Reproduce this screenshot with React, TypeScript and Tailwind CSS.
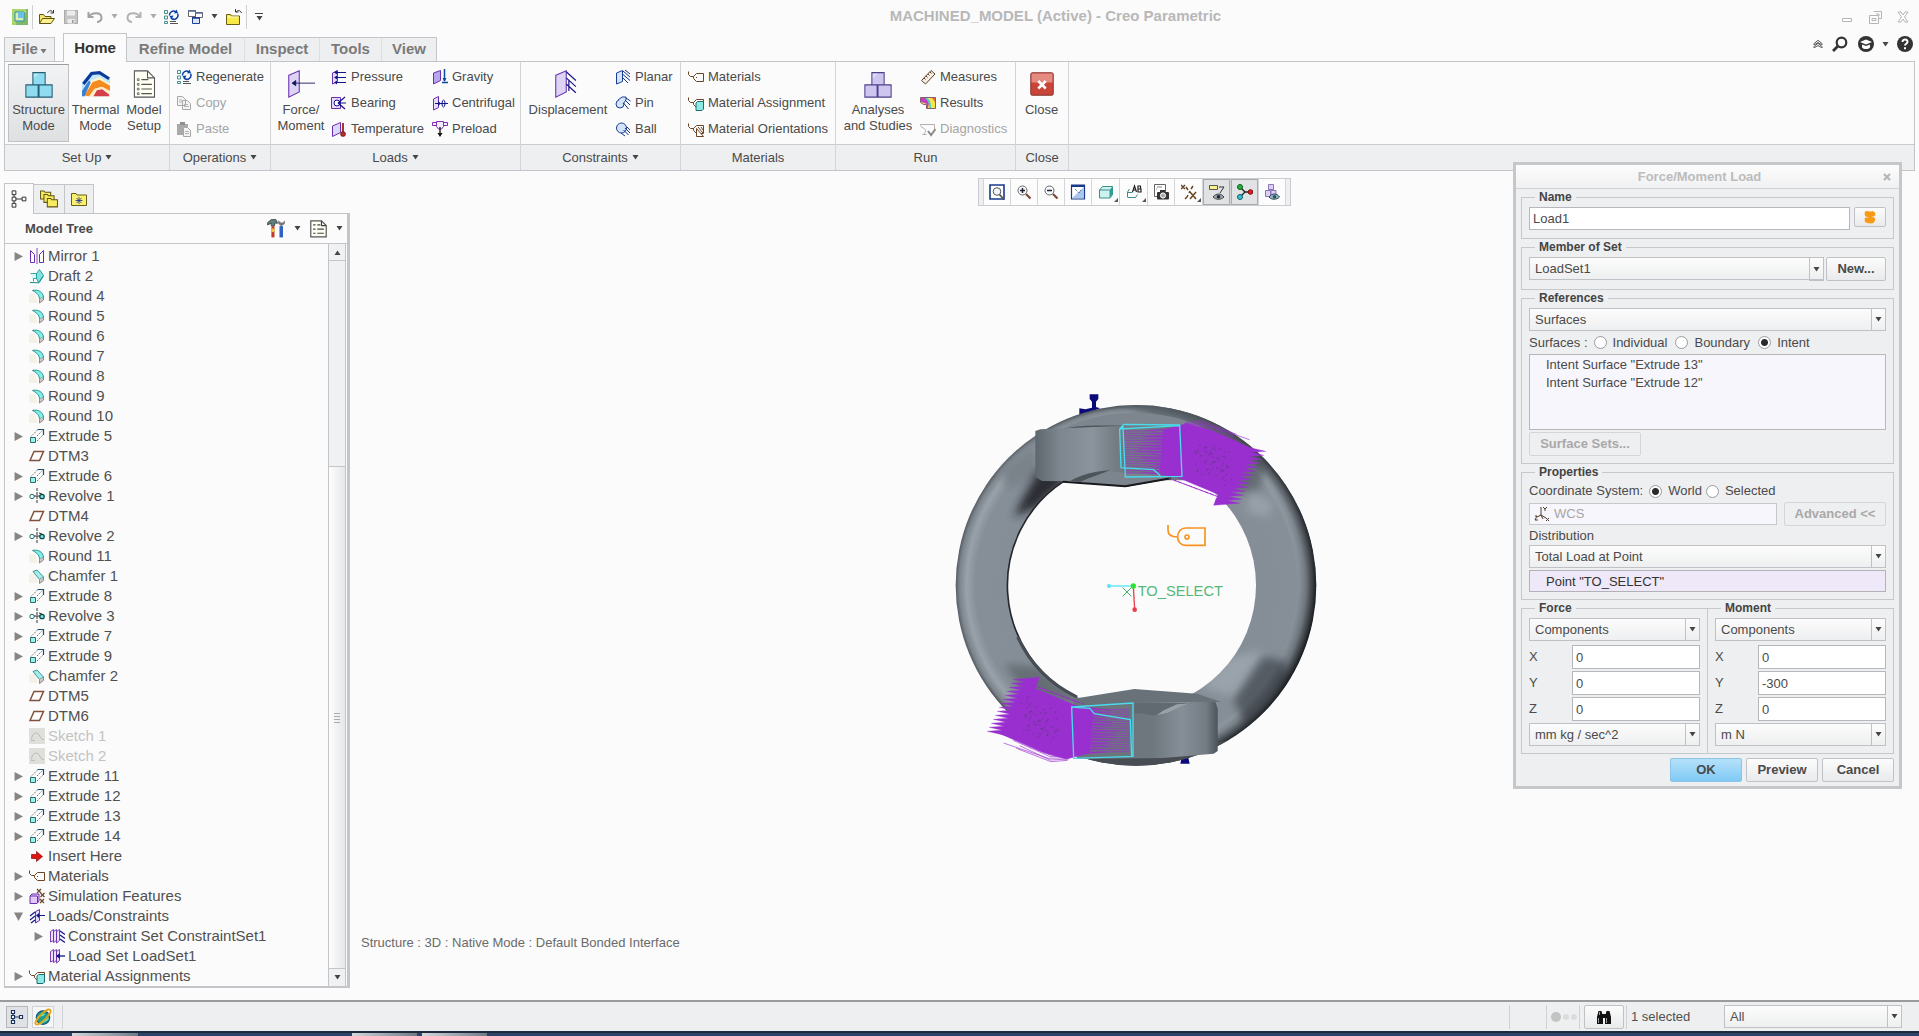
import { useState } from "react";
import type { ReactNode } from "react";

type IconName = keyof typeof ICONS;

type TreeNode = {
  label: string;
  icon: IconName;
  arrow?: "right" | "down";
  level?: number;
  muted?: boolean;
};

const GREEN = "#0f8f8f";
const NAVY = "#14148c";
const PURPLE = "#6a2fb0";

const pane = <path d="M1.5 4 6.5 1.5v11L1.5 15z" fill="#e6dcfa" stroke={PURPLE} />;
const tag = (
  <path d="M.5 2.5v3l2 2h3M5.5 7.5l3-3h7v8h-7l-3-3zM8 8.500h1" fill="none" stroke="#6b4423" />
);
const regen = (
  <>
    <path d="M1.500 1.500h3v3h-3zM1.500 7h3v3h-3zM1.500 12.500h3v2h-3z" fill="#fff" stroke="#3f8f8f" />
    <path d="M7 12.500h6M7 14.500h8" stroke="#555" />
    <path d="M6.500 6.500a4 4 0 0 1 6.500-3.500M14.500 4.500a4 4 0 0 1-6.500 4.500" fill="none" stroke="#0b3fa8" strokeWidth="1.500" />
    <path d="m11 4.500 4-.5-1.500-3.500zM10.500 6.500l-4 .5 2 3.500z" fill="#0b3fa8" />
  </>
);
const page = (
  <>
    <path d="M1.500 1.500h9l4 4v9.500h-13z" fill="#fffef5" stroke="#555" />
    <path d="M10.500 1.500v4h4M3.500 5h2M3.500 8.500h2M3.500 12h2M7 5h2.500M7 8.500h5.500M7 12h5.500" fill="none" stroke="#444" />
  </>
);
const cubes = (fill: string, line: string) => (
  <>
    <path d="M4.500 1.500h7v7h-7zM.5 8.500h7v7h-7zM8 8.500h7.500v7H8z" fill={fill} stroke={line} strokeWidth=".6" />
    <path d="M5 5 8 2h-3z" fill="#fff" opacity=".35" />
  </>
);
const panes3 = (
  <path d="M1.500 3.500 4.500 1.500v11l-3 1.500zM4.500 3.500l3-2v11l-3 2zM7.500 3.500l3-2v11l-3 2.500z" fill="#eadffc" stroke={PURPLE} strokeWidth=".9" />
);
const lens = (
  <>
    <path d="m10 10 4.500 4.500" stroke="#7a4a3a" strokeWidth="2.200" />
    <circle cx="6.500" cy="6.500" r="4.500" fill="#f4fafd" stroke="#666" />
  </>
);

const ICONS = {
  app: (
    <>
      <path d="M0 0h16v16H0z" fill="#7fb868" />
      <path d="M0 0h14v4H4v12H0z" fill="#a9d66b" />
      <path d="M3 3h9v9H3z" fill="#d8efb0" stroke="#2f8fc0" />
      <path d="M6 3h6v6H6z" fill="#6cc0e4" />
    </>
  ),
  open: (
    <>
      <path d="M.5 14.500v-9h4l1.500 2h6v2" fill="#f5e36b" stroke="#5f5416" />
      <path d="m.5 14.500 3-5h12l-3.500 5z" fill="#fbf08c" stroke="#5f5416" />
      <path d="M8.500 4c1.500-3 4-3 5.500-.5M14.500 1v3h-3" fill="none" stroke="#333" />
    </>
  ),
  save: (
    <>
      <path d="M1.500 1.500h13v13h-13z" fill="#c6c6c6" stroke="#a8a8a8" />
      <path d="M4 1.500h8v5H4zM4.500 10h7v4.500h-7z" fill="#ececec" />
      <path d="M9 11h1.500v3H9z" fill="#999" />
    </>
  ),
  undo: <path d="M1.500 3v5h5M2 8c2-4.500 12-5.500 12.500.5.2 3-2.500 4.500-4.500 4.500" fill="none" stroke="#a3a3a3" strokeWidth="2" />,
  redo: <path d="M14.500 3v5h-5M14 8C12 3.500 2 2.500 1.500 8.500 1.300 11.500 4 13 6 13" fill="none" stroke="#b3b3b3" strokeWidth="2" />,
  regen,
  windows: (
    <>
      <path d="M1.500 1.500h7v6h-7zM8.500 3.500h7v5h-7z" fill="#fff" stroke="#666" />
      <path d="M1 2h8M8 4h8" stroke="#5b6f96" strokeWidth="1.500" />
      <path d="M5.500 8.500h7v6h-7z" fill="#d9e6fb" stroke="#1c3f94" />
      <path d="M5 9h8" stroke="#1c3f94" strokeWidth="1.500" />
    </>
  ),
  closeFolder: (
    <>
      <path d="M.5 15.500v-10h4l1 1.500h8v8.500z" fill="#f7e948" stroke="#6b5f18" />
      <path d="M1.500 8h11" stroke="#fffbd0" />
      <path d="M15.500 4c-1-3-4-3-5.500-1M9.500 0v3h3" fill="none" stroke="#333" />
    </>
  ),
  structure: cubes("#8fdcf0", "#245c74"),
  thermal: (
    <>
      <path d="M0 15V7l5-6h6l5 4v10z" fill="#bfe6fa" />
      <path d="M.8 8 5.500 2 10 1.500 15.500 5" fill="none" stroke="#0c3a9a" strokeWidth="1.800" />
      <path d="M0 12.500 5 6l5-2 6 4v7H0z" fill="#fff2cf" />
      <path d="m1.500 14.500 4.500-7.500 4-1.500L16 9v3l-5-2.500-4 1.500-3 4z" fill="#f58a1f" />
      <path d="M0 15v-3l4-6 1 1-3.500 8z" fill="#3a7fd0" />
      <path d="m6.500 15 2-3.500 3-.5 4 3v1z" fill="#d3404a" />
      <path d="m5 15 2.500-4 4-1 4.500 2.500" fill="none" stroke="#ffe9c4" strokeWidth=".8" />
    </>
  ),
  setup: (
    <>
      <path d="M2.500.5H10l4 4v11H2.500z" fill="#fffff4" stroke="#555" strokeWidth=".6" />
      <path d="M10 .5v4h4M6.500 5.500h4M6.500 8.200h6M6.500 10.900h6M6.500 13.500h6" fill="none" stroke="#555" strokeWidth=".6" />
      <path d="M4.200 5h1v1h-1zM4.200 7.700h1v1h-1zM4.200 10.400h1v1h-1zM4.200 13h1v1h-1z" fill="none" stroke="#444" strokeWidth=".4" />
    </>
  ),
  copy: (
    <>
      <path d="M1.500 1.500h5l3 3v6h-8zM6.500 5.500h5l3 3v6h-8z" fill="#f4f4f4" stroke="#a8a8a8" />
      <path d="M3 5h3M3 7h3M8 9.500h4M8 11.500h5" stroke="#b5b5b5" />
    </>
  ),
  paste: (
    <>
      <path d="M1 3h11v11H1z" fill="#aaa" />
      <path d="M4 1h5v3H4z" fill="#8f8f8f" />
      <path d="M7.500 6.500h4l3 3v6h-7z" fill="#f4f4f4" stroke="#a8a8a8" />
      <path d="M9 10.500h4M9 12.500h4" stroke="#b5b5b5" />
    </>
  ),
  force: (
    <>
      <path d="M1 3 7 .5v12L1 15.500z" fill="#dcd3f5" stroke={PURPLE} strokeWidth=".6" />
      <path d="M3 7.500h13M3 7.500l2-1.500v3z" fill="#14145a" stroke="#14145a" strokeWidth=".5" />
    </>
  ),
  pressure: (
    <>
      {pane}
      <path d="M4 3.500h11M4 8.500h11M4 13.500h11" stroke={NAVY} />
      <path d="m3 3.500 3-2v4zM3 8.500l3-2v4zM3 13.500l3-2v4z" fill={NAVY} />
    </>
  ),
  bearing: (
    <>
      <path d="M.5 2.500h9v11h-9z" fill="#e6dcfa" stroke={PURPLE} />
      <circle cx="6" cy="8" r="3" fill="#fff" stroke={NAVY} />
      <path d="M7 8 14 2M7 8h8M7 8l7 6" stroke={NAVY} strokeWidth="1.200" />
    </>
  ),
  temperature: (
    <>
      <path d="M1.500 5 9.500 1.500v10l-8 4z" fill="#d9d8fa" stroke={PURPLE} />
      <path d="M12 2v9" stroke="#a33" strokeWidth="2" />
      <circle cx="12" cy="13" r="2.500" fill="#b52a2a" stroke="#611" strokeWidth=".6" />
    </>
  ),
  gravity: (
    <>
      <path d="M1.500 4 8.500 1.500v10l-7 3.500z" fill="#b9a5ee" stroke={PURPLE} />
      <path d="M12.500 0v12M10 13.500h6" stroke="#104a9c" strokeWidth="1.500" />
      <path d="m10.500 9 2 4 2-4z" fill="#104a9c" />
    </>
  ),
  centrifugal: (
    <>
      {pane}
      <path d="M3 8.500h13" stroke={NAVY} />
      <path d="m6 6 3 2.500L6 11z" fill={NAVY} />
      <ellipse cx="11.500" cy="8.500" rx="1.500" ry="3.500" fill="none" stroke={NAVY} />
    </>
  ),
  preload: (
    <>
      <path d="M.5 1.500h4v3h-4zM11.500 1.500h4v3h-4zM4.500.5h7v5l-2 2.500h-3l-2-2.500z" fill="#f4ecff" stroke="#8030b0" />
      <path d="M8 6v8" stroke="#111" strokeWidth="1.300" />
      <path d="m5.500 12 2.500 4 2.500-4z" fill="#111" />
    </>
  ),
  displacement: (
    <>
      <path d="M1 3 7 .5v12L1 15.500z" fill="#dcd3f5" stroke={PURPLE} strokeWidth=".6" />
      <path d="m7 1 5.500 5M7 4.500l5.500 5M7 8l5.500 5M8.500 5.500V12" stroke="#1b1b80" strokeWidth=".7" />
    </>
  ),
  planar: (
    <>
      <path d="M1.500 4 7.500 1.500v11l-6 2.500z" fill="#d3e4fb" stroke="#1c3f94" />
      <path d="m8 2 7 6M8 5.500l7 6M8 9l5 5M10 1l5 4" stroke="#16308c" />
    </>
  ),
  pin: (
    <>
      <circle cx="5" cy="9" r="4" fill="#d3e4fb" stroke="#1c3f94" />
      <path d="m3 5 4-3h4v3l-3 4" fill="#d3e4fb" stroke="#1c3f94" />
      <path d="m10 5 5 5M8.500 8l5 6M11 3l4.500 3" stroke="#16308c" />
    </>
  ),
  ball: (
    <>
      <circle cx="6.500" cy="7" r="5" fill="#d3e4fb" stroke="#1c3f94" />
      <path d="m10 7 5 5M8.500 9l5 5M6 12l4 3M12 6l3 3" stroke="#16308c" />
    </>
  ),
  materials: tag,
  assignment: (
    <>
      {tag}
      <path d="m8 8 1.500-1.500h6V14L14 15.500H8z" fill="#8ee8e4" stroke="#1a7070" />
    </>
  ),
  orientations: (
    <>
      {tag}
      <path d="M8.500 7.500v8h7z" fill="#fff" stroke="#6b4423" />
      <path d="m10 6 5 6M13 6l2 3" stroke="#6b4423" />
    </>
  ),
  analyses: cubes("#cfc6f0", "#4d3f8a"),
  measures: (
    <>
      <path d="m1.500 11.500 9.500-10 4 3.500-9.500 10z" fill="#f7efe2" stroke="#5a3d28" />
      <path d="m4 9 1.500 1.500M6 7l1.500 1.500M8 5l1.500 1.500M10 3l1.500 1.500" stroke="#5a3d28" />
    </>
  ),
  results: (
    <>
      <path d="M.5 2.500h15v11h-9v-4h-3l-3-2z" fill="#f2e64a" stroke="#8a5b6c" />
      <path d="M1 3h5l3 5-1 5H7V9L1 7z" fill="#c23fc0" />
      <path d="M7 3c3 2 4 5 4 10H9.500C9 8 8 5 5 3z" fill="#45d0c8" />
      <path d="M12 3l3 4V3z" fill="#e9663a" />
    </>
  ),
  diagnostics: (
    <>
      <path d="M.5 3.500h14v5M.5 3.500c0 4 5 3 5 6s-2 4-3 4h4" fill="none" stroke="#b0b0b0" />
      <path d="m8 10 3 4 4.500-6" fill="none" stroke="#8b8b8b" strokeWidth="2" />
    </>
  ),
  close: (
    <>
      <rect x=".5" y=".5" width="15" height="15" rx="1" fill="#c9453a" stroke="#7d2a22" strokeWidth=".6" />
      <path d="M1 1h14v6H1z" fill="#e58a80" />
      <path d="m5.500 6 5 5M10.500 6l-5 5" stroke="#fff" strokeWidth="1.700" />
    </>
  ),
  treeTab: <path d="M2.500 1.500h3v3h-3zM2.500 6.500h3v3h-3zM2.500 11.500h3v3h-3zM10.500 6.500h3v3h-3zM4 4.500v2M4 9.500v2M5.500 8h5" fill="none" stroke="#333" strokeWidth=".8" />,
  treeTabBlue: <path d="M2.500 1.500h3v3h-3zM2.500 6.500h3v3h-3zM2.500 11.500h3v3h-3zM10.500 6.500h3v3h-3zM4 4.500v2M4 9.500v2M5.500 8h5" fill="#fff" stroke="#1c3560" strokeWidth="1.200" />,
  folders: (
    <g fill="#f7ec5f" stroke="#5f5416" strokeWidth=".9">
      <path d="M.5 8V.8h3L4.500 2h5v6z" />
      <path d="M3.500 11V4h3l1 1.200h5V11z" />
      <path d="M6.500 15V7.500h3l1 1.200h5V15z" />
    </g>
  ),
  favorites: (
    <>
      <path d="M.5 14.500V2.500h4.500l1 1.500h9.500v10.500z" fill="#f9f070" stroke="#6b5f18" />
      <path d="M8 6v7M4.500 9.500h7M5.500 7l5 5M10.500 7l-5 5" stroke="#16308c" strokeWidth=".8" />
    </>
  ),
  tools: (
    <>
      <path d="M.5 5V3l3-2.500h4L9 3.500H6.500v2h-3V3.500z" fill="#5d7f7f" stroke="#333" strokeWidth=".6" />
      <path d="M5 6v9.500" stroke="#c0392b" strokeWidth="2.600" />
      <path d="M5 8v3" stroke="#f0c040" strokeWidth="2.600" />
      <path d="M12 6v9.500" stroke="#2f63c4" strokeWidth="3" />
      <path d="M9.500 1v3l2.500 2 3-2V1l-1.500 2h-2z" fill="#777" />
    </>
  ),
  list: page,
  mirror: (
    <>
      <path d="M1.500 14.500v-12l4 4v8zM14.500 14.500v-12l-4 4v8z" fill="#fff" stroke={PURPLE} />
      <path d="M8 0v16" stroke="#8a4ab0" />
    </>
  ),
  draft: (
    <>
      <path d="M7.500 5.500l3-4 4 6-5 7-2-4z" fill="#7fe3e0" stroke={GREEN} strokeWidth=".8" />
      <path d="M1.500 5.500h6v5h-3v3" fill="#d8f7f5" stroke={GREEN} strokeWidth=".8" />
      <path d="m1 14.500 9 .3 4.500-7" fill="none" stroke={GREEN} />
    </>
  ),
  round: (
    <>
      <path d="M0 6h6l3 9H0z" fill="#f6f1e8" />
      <path d="M3.500 2.500C9 1 14 4 14.500 9l-4 2.500C10.500 8 9 5.500 3.500 2.500z" fill="#7cf0ec" stroke="#217878" strokeWidth=".8" />
      <path d="M10.500 11.500V15l4-3V9" fill="#cfc9c0" stroke="#777" strokeWidth=".8" />
    </>
  ),
  chamfer: (
    <>
      <path d="M0 6h6l3 9H0z" fill="#f6f1e8" />
      <path d="m4 3.500 4-1.500 6.500 7-4 2.500z" fill="#9ff0ec" stroke="#217878" strokeWidth=".8" />
      <path d="M10.500 12v3.500l4-3V9" fill="#cfc9c0" stroke="#777" strokeWidth=".8" />
    </>
  ),
  extrude: (
    <>
      <path d="M1.500 9.500h5v5h-5z" fill="#98f3ee" stroke="#2a6b6b" />
      <path d="m2 8.500 6.500-6.500M8 13l6-6M8 8l5.500-5.500" fill="none" stroke="#555" strokeWidth=".8" strokeDasharray="1.500 1" />
      <path d="M8.500 1.500h6V7" fill="none" stroke="#14506a" strokeWidth="1.200" />
    </>
  ),
  revolve: (
    <>
      <path d="M8 0v16" stroke="#333" strokeDasharray="3 1" />
      <circle cx="3" cy="8.500" r="2.200" fill="#dff" stroke="#2a6b6b" />
      <circle cx="13" cy="8.500" r="2.200" fill="#7fe3e0" stroke="#0d4f4f" strokeWidth="1.300" />
      <path d="M5 8h6M10 5l3 1" stroke="#333" />
    </>
  ),
  datum: <path d="M5 3.500h9.500l-4 9H1z" fill="#fff" stroke="#83503a" strokeWidth="1.500" />,
  sketch: (
    <>
      <path d="M0 0h16v16H0z" fill="#dfdfdc" />
      <path d="M2.500 11.500C3 4 9 3 11 8.500l2 3h2M2 12.500h4" fill="none" stroke="#bdbdb6" />
    </>
  ),
  insert: <path d="M2.500 6.500h5v-3l6 5-6 5v-3h-5z" fill="#e01212" stroke="#8a0a0a" strokeWidth=".7" />,
  simulation: (
    <>
      <path d="m1 8 2-2h7v7l-2 2.500H1z" fill="#e3c8f7" stroke={PURPLE} />
      <path d="M8.500 8v7M1 8h7" stroke={PURPLE} />
      <path d="m8 1 4 4M12 1 8 5M11.500 5l4 4M15.500 5l-4 4M11 11l4 4M15 11l-4 4" stroke="#6b4423" strokeWidth="1.200" />
    </>
  ),
  loads: (
    <>
      <path d="M6.500 3.500 10.500 1.500v11l-4 2.500z" fill="#e6dcfa" stroke={PURPLE} />
      <path d="M6 4 1 8M6 8l-5 4M6 12l-4 3M8 7.500h8" stroke={NAVY} strokeWidth="1.200" />
      <path d="m7 7.500 3-2.500v5z" fill={NAVY} />
    </>
  ),
  constraintSet: (
    <>
      {panes3}
      <path d="m11 3 5 3.500M11 7l5 3.500M11 11l5 3.500" stroke={NAVY} strokeWidth="1.300" />
    </>
  ),
  loadSet: (
    <>
      {panes3}
      <path d="M8 8h8" stroke={NAVY} strokeWidth="1.300" />
      <path d="m7 8 4-3v6z" fill={NAVY} />
    </>
  ),
  refit: (
    <>
      <path d="M1 1h14v14H1z" fill="#fff" stroke="#173a8a" strokeWidth="1.600" />
      <circle cx="8" cy="7.500" r="3.800" fill="#eef6fa" stroke="#555" />
      <path d="m10.500 10.500 4.500 5" stroke="#555" strokeWidth="1.800" />
    </>
  ),
  zoomIn: (
    <>
      {lens}
      <path d="M4 6.500h5M6.500 4v5" stroke="#223" strokeWidth="1.500" />
    </>
  ),
  zoomOut: (
    <>
      {lens}
      <path d="M4 6.500h5" stroke="#223" strokeWidth="1.500" />
    </>
  ),
  repaint: (
    <>
      <path d="M1.500 1h13v14h-13z" fill="#fff" stroke="#173a8a" strokeWidth="1.200" />
      <path d="M1 2h14" stroke="#173a8a" strokeWidth="2" />
      <path d="M2 14 14 3v11z" fill="#a9c6ee" />
      <path d="m5 5 4 4 2-3" fill="none" stroke="#456" strokeDasharray="1 1" />
    </>
  ),
  shading: (
    <>
      <path d="m1.500 6 3-3.500h10v8L12 14H1.500z" fill="#cdf3ef" stroke="#3a8f8a" />
      <path d="M11.500 6v8l3-3.500v-8z" fill="#2f9f98" />
      <path d="M1.500 6h10" stroke="#3a8f8a" />
    </>
  ),
  namedViews: (
    <>
      <path d="M1.500 13V8l2-3M1.500 8.500h5M1.500 13.500h8l2-3" fill="none" stroke="#3a8f8a" />
      <path d="m6.500 8 2-6 2 6M7 6h3M12 8V2h2.500v3H12h3v3z" fill="none" stroke="#222" strokeWidth="1.200" />
    </>
  ),
  viewManager: (
    <>
      <path d="M1.500.5h11v12h-11z" fill="#fff" stroke="#666" />
      <path d="M4 3h5M3 5h1" stroke="#888" />
      <rect x="4" y="8" width="12" height="7.500" rx="1" fill="#333" />
      <path d="M7 6h5v2H7z" fill="#333" />
      <circle cx="10" cy="11.500" r="2.600" fill="#aaa" stroke="#fff" />
    </>
  ),
  datums: <path d="m0 1 4 4M4 1 0 5M6 13l1-2M8 9l1-2M10 5l2-3M9 8l6 7M15 8l-6 7M5 3l2 3M4 15l2-2" fill="none" stroke="#6b4423" strokeWidth="1.500" />,
  annotations: (
    <>
      <path d="M.5 1.500h8v4h-8z" fill="#fbf28a" stroke="#555" />
      <path d="M10 3h5l-4 6" fill="none" stroke="#333" />
      <path d="M4 13c3-4 8-4 11 0-3 3-8 3-11 0z" fill="#9aa7b0" stroke="#444" />
      <circle cx="9.500" cy="12.800" r="1.800" fill="#223" />
    </>
  ),
  spin: (
    <>
      <path d="M3 3l5 5h6M8 8l-5 5" fill="none" stroke="#222" strokeWidth="1.300" />
      <circle cx="3" cy="3" r="2.500" fill="#25b53c" stroke="#0d5c1c" />
      <circle cx="3" cy="13" r="2.500" fill="#35c5d5" stroke="#0d5c6c" />
      <circle cx="13.500" cy="8" r="2.300" fill="#e02020" stroke="#7a0d0d" />
    </>
  ),
  display: (
    <>
      <path d="M4.500.5h5v5h-5zM1.500 6.500h5v6h-5zM7 6.500h5v6H7z" fill="#dccff5" stroke="#8a74bd" />
      <path d="M5 13c3-4 8-4 10.500 0-3 3-8 3-10.500 0z" fill="#9fb6c0" stroke="#345" />
      <circle cx="10.500" cy="12.800" r="1.800" fill="#0e5c66" />
    </>
  ),
  flip: <path d="M2 2c3-2 5 1 9-1l3 2v3c-1 2-3 1-4 2 3 0 4 1 4 3-1 4-4 5-6 4-3 0-4 0-6-2V9c1-1 3 0 5-1-3 0-5-1-5-3z" fill="#f79a16" />,
  wcs: <path d="M7 1v8M7 9l-4 2M7 9l5 3M7 9l2 4M9 1l2 2 2-2M11 3v2M1 10h2l-2 4h3M12 12l3 3M15 12l-3 3" fill="none" stroke="#4a3a28" />,
  globe: (
    <>
      <circle cx="8" cy="8.500" r="6" fill="#1e9c8c" stroke="#0f4f78" />
      <path d="M3 9c3-4 5-1 6-4M6 14c2-3 5-2 7-5" fill="none" stroke="#6de0c0" strokeWidth="1.500" />
      <ellipse cx="8" cy="8" rx="9" ry="2.800" transform="rotate(-45 8 8)" fill="none" stroke="#e3a516" strokeWidth="1.600" />
    </>
  ),
  binoculars: (
    <>
      <path d="M1 15V8l1.500-6h3L7 8v7zM9 15V8l1.500-6h3L15 8v7zM6 5h4v4H6z" fill="#111" />
      <path d="M2.500 9v5M10.500 9v5M3.500 3v3" stroke="#999" />
    </>
  ),
  collapse: <path d="m2 8 6-5 6 5-1 1-5-3-5 3zM2 12l6-5 6 5-1 1-5-3-5 3z" fill="#fff" stroke="#444" strokeWidth="1.200" />,
  search: (
    <>
      <circle cx="9.500" cy="6.500" r="4.800" fill="none" stroke="#333" strokeWidth="2.200" />
      <path d="m6 10-5 5" stroke="#333" strokeWidth="2.800" />
    </>
  ),
  learn: (
    <>
      <circle cx="8" cy="8" r="8" fill="#333" />
      <path d="m2 6 6-2.500L14 6 8 8.500zM4 8.500v3c2 2 6 2 8 0v-3L8 10z" fill="#fff" />
    </>
  ),
  help: (
    <>
      <circle cx="8" cy="8" r="8" fill="#333" />
      <path d="M5.500 6c0-3.500 5.500-3.200 5 .2-.2 1.500-2.500 1.600-2.500 3.300" fill="none" stroke="#fff" strokeWidth="2" />
      <path d="M7 11.200h2v2H7z" fill="#fff" />
    </>
  ),
  minimize: <path d="M3.500 9.500h9v3h-9z" fill="#fff" stroke="#b5b5b5" />,
  restore: <path d="M6.500 2.500h8v7h-3M9 5h3v2M2.500 6.500h9v8h-9zM5 9.500h4v2H5z" fill="none" stroke="#b5b5b5" />,
  exit: <path d="M3 3h3l2 3 2-3h3l-3.500 5L13 13h-3l-2-3-2 3H3l3.500-5z" fill="#fff" stroke="#b5b5b5" />,
};

function Icon({ name, className = "h-4 w-4" }: { name: IconName; className?: string }) {
  return (
    <svg viewBox="0 0 16 16" className={`shrink-0 ${className}`} aria-hidden="true">
      {ICONS[name]}
    </svg>
  );
}

function Caret({ className = "fill-[#444]" }: { className?: string }) {
  return (
    <svg viewBox="0 0 7 5" className={`h-[5px] w-[7px] shrink-0 ${className}`} aria-hidden="true">
      <path d="M.5 0h6L3.500 4.500z" />
    </svg>
  );
}

function TitleBar() {
  return (
    <header className="relative flex h-[33px] items-center justify-between">
      <div className="flex items-center pl-3">
        <Icon name="app" />
        <span className="ml-1 h-6 w-px bg-[#cfcfcf]" />
        <button aria-label="Open" className="ml-1.5"><Icon name="open" /></button>
        <button aria-label="Save" className="ml-2"><Icon name="save" /></button>
        <button aria-label="Undo" className="ml-2"><Icon name="undo" /></button>
        <button aria-label="Undo list" className="ml-2"><Caret className="fill-[#aaa]" /></button>
        <button aria-label="Redo" className="ml-2"><Icon name="redo" /></button>
        <button aria-label="Redo list" className="ml-2"><Caret className="fill-[#aaa]" /></button>
        <button aria-label="Regenerate" className="ml-1.5"><Icon name="regen" /></button>
        <button aria-label="Windows" className="ml-2"><Icon name="windows" /></button>
        <button aria-label="Window list" className="ml-2"><Caret /></button>
        <button aria-label="Close window" className="ml-2"><Icon name="closeFolder" /></button>
        <span className="ml-1 h-6 w-px bg-[#cfcfcf]" />
        <button aria-label="Customize" className="ml-2 flex flex-col items-center gap-0.5">
          <span className="h-px w-2 bg-[#444]" />
          <Caret />
        </button>
      </div>
      <h1 className="absolute left-[55%] -translate-x-1/2 text-[15px] font-bold text-[#b8b8b8]">
        MACHINED_MODEL (Active) - Creo Parametric
      </h1>
      <div className="flex items-center gap-3 pr-2">
        <button aria-label="Minimize"><Icon name="minimize" /></button>
        <button aria-label="Restore"><Icon name="restore" /></button>
        <button aria-label="Close application"><Icon name="exit" /></button>
      </div>
    </header>
  );
}

const tabs = [
  { label: "Refine Model", width: "w-[117px]" },
  { label: "Inspect", width: "w-[75px]" },
  { label: "Tools", width: "w-[62px]" },
  { label: "View", width: "w-[55px]" },
];

function TabRow() {
  return (
    <nav className="relative z-10 -mb-px flex items-end justify-between pr-1.5 pl-1 text-[15px] font-bold text-[#7a7a7a]">
      <div className="flex items-end">
        <button className="flex h-[25px] w-[51px] items-center justify-center gap-0.5 border border-[#c3c5c8] bg-[#eeeff0]">
          File <Caret className="mt-1 fill-[#777]" />
        </button>
        <button className="ml-2 h-[29px] w-[64px] border border-b-0 border-[#c3c5c8] bg-[#fbfbfb] text-[#333]">
          Home
        </button>
        <div className="flex border-y border-r border-[#c3c5c8] bg-[#eeeff0]">
          {tabs.map((tab, i) => (
            <button
              key={tab.label}
              className={`h-[23px] ${tab.width} ${i > 0 ? "border-l border-[#dcdee0]" : ""}`}
            >
              {tab.label}
            </button>
          ))}
        </div>
      </div>
      <div className="flex items-center gap-2 pb-2.5">
        <button aria-label="Collapse ribbon"><Icon name="collapse" className="h-3 w-3" /></button>
        <button aria-label="Search commands"><Icon name="search" /></button>
        <button aria-label="Learning" className="ml-0.5"><Icon name="learn" /></button>
        <button aria-label="Learning menu"><Caret /></button>
        <button aria-label="Help"><Icon name="help" /></button>
      </div>
    </nav>
  );
}

function BigButton({ icon, lines, width, active }: { icon: IconName; lines: string[]; width: string; active?: boolean }) {
  return (
    <button
      className={`flex h-[78px] flex-col items-center border pt-[5px] leading-4 ${width} ${
        active ? "border-[#bfc1c4] border-t-[#9a9c9e] bg-linear-to-b from-[#f2f3f4] to-[#dfe0e2]" : "border-transparent"
      }`}
    >
      <span className="mb-1 flex h-7 items-center">
        <Icon name={icon} className={icon === "close" ? "h-6 w-6" : "h-7 w-7"} />
      </span>
      {lines.map((line) => (
        <span key={line} className="whitespace-nowrap">{line}</span>
      ))}
    </button>
  );
}

type Item = { icon: IconName; label: string; disabled?: boolean };

function ItemColumn({ items, className = "" }: { items: Item[]; className?: string }) {
  return (
    <div className={`flex flex-col ${className}`}>
      {items.map((item) => (
        <button
          key={item.label}
          disabled={item.disabled}
          className="flex h-[26px] items-center gap-1 whitespace-nowrap disabled:text-[#a5a5a5]"
        >
          <Icon name={item.icon} />
          {item.label}
        </button>
      ))}
    </div>
  );
}

function Group({ label, width, menu, children }: { label: string; width: string; menu?: boolean; children: ReactNode }) {
  return (
    <section className={`flex flex-col border-r border-[#d3d5d8] ${width}`}>
      <div className="flex h-[82px] pt-0.5">{children}</div>
      <div className="flex h-[26px] items-center justify-center gap-1 border-t border-[#c9cbce] bg-[#eeeff0]">
        {label}
        {menu && <Caret />}
      </div>
    </section>
  );
}

function Ribbon() {
  return (
    <div className="mx-1 flex border border-[#c3c5c8] text-[13px] text-[#4a4a4a]">
      <Group label="Set Up" width="w-[165px]" menu>
        <BigButton icon="structure" lines={["Structure", "Mode"]} width="ml-[3px] w-[61px]" active />
        <BigButton icon="thermal" lines={["Thermal", "Mode"]} width="w-[53px]" />
        <BigButton icon="setup" lines={["Model", "Setup"]} width="w-[44px]" />
      </Group>
      <Group label="Operations" width="w-[101px]" menu>
        <ItemColumn
          className="pl-1.5"
          items={[
            { icon: "regen", label: "Regenerate" },
            { icon: "copy", label: "Copy", disabled: true },
            { icon: "paste", label: "Paste", disabled: true },
          ]}
        />
      </Group>
      <Group label="Loads" width="w-[250px]" menu>
        <BigButton icon="force" lines={["Force/", "Moment"]} width="w-[60px]" />
        <ItemColumn
          className="w-[99px]"
          items={[
            { icon: "pressure", label: "Pressure" },
            { icon: "bearing", label: "Bearing" },
            { icon: "temperature", label: "Temperature" },
          ]}
        />
        <ItemColumn
          className="pl-0.5"
          items={[
            { icon: "gravity", label: "Gravity" },
            { icon: "centrifugal", label: "Centrifugal" },
            { icon: "preload", label: "Preload" },
          ]}
        />
      </Group>
      <Group label="Constraints" width="w-[160px]" menu>
        <BigButton icon="displacement" lines={["Displacement"]} width="w-[94px]" />
        <ItemColumn
          items={[
            { icon: "planar", label: "Planar" },
            { icon: "pin", label: "Pin" },
            { icon: "ball", label: "Ball" },
          ]}
        />
      </Group>
      <Group label="Materials" width="w-[155px]">
        <ItemColumn
          className="pl-[7px]"
          items={[
            { icon: "materials", label: "Materials" },
            { icon: "assignment", label: "Material Assignment" },
            { icon: "orientations", label: "Material Orientations" },
          ]}
        />
      </Group>
      <Group label="Run" width="w-[180px]">
        <BigButton icon="analyses" lines={["Analyses", "and Studies"]} width="w-[84px]" />
        <ItemColumn
          items={[
            { icon: "measures", label: "Measures" },
            { icon: "results", label: "Results" },
            { icon: "diagnostics", label: "Diagnostics", disabled: true },
          ]}
        />
      </Group>
      <Group label="Close" width="w-[53px]">
        <BigButton icon="close" lines={["Close"]} width="w-[51px]" />
      </Group>
      <div className="flex flex-1 flex-col justify-end">
        <div className="h-[26px] border-t border-[#c9cbce] bg-[#eeeff0]" />
      </div>
    </div>
  );
}

const tree: TreeNode[] = [
  { label: "Mirror 1", icon: "mirror", arrow: "right" },
  { label: "Draft 2", icon: "draft" },
  { label: "Round 4", icon: "round" },
  { label: "Round 5", icon: "round" },
  { label: "Round 6", icon: "round" },
  { label: "Round 7", icon: "round" },
  { label: "Round 8", icon: "round" },
  { label: "Round 9", icon: "round" },
  { label: "Round 10", icon: "round" },
  { label: "Extrude 5", icon: "extrude", arrow: "right" },
  { label: "DTM3", icon: "datum" },
  { label: "Extrude 6", icon: "extrude", arrow: "right" },
  { label: "Revolve 1", icon: "revolve", arrow: "right" },
  { label: "DTM4", icon: "datum" },
  { label: "Revolve 2", icon: "revolve", arrow: "right" },
  { label: "Round 11", icon: "round" },
  { label: "Chamfer 1", icon: "chamfer" },
  { label: "Extrude 8", icon: "extrude", arrow: "right" },
  { label: "Revolve 3", icon: "revolve", arrow: "right" },
  { label: "Extrude 7", icon: "extrude", arrow: "right" },
  { label: "Extrude 9", icon: "extrude", arrow: "right" },
  { label: "Chamfer 2", icon: "chamfer" },
  { label: "DTM5", icon: "datum" },
  { label: "DTM6", icon: "datum" },
  { label: "Sketch 1", icon: "sketch", muted: true },
  { label: "Sketch 2", icon: "sketch", muted: true },
  { label: "Extrude 11", icon: "extrude", arrow: "right" },
  { label: "Extrude 12", icon: "extrude", arrow: "right" },
  { label: "Extrude 13", icon: "extrude", arrow: "right" },
  { label: "Extrude 14", icon: "extrude", arrow: "right" },
  { label: "Insert Here", icon: "insert" },
  { label: "Materials", icon: "materials", arrow: "right" },
  { label: "Simulation Features", icon: "simulation", arrow: "right" },
  { label: "Loads/Constraints", icon: "loads", arrow: "down" },
  { label: "Constraint Set ConstraintSet1", icon: "constraintSet", arrow: "right", level: 1 },
  { label: "Load Set LoadSet1", icon: "loadSet", level: 1 },
  { label: "Material Assignments", icon: "assignment", arrow: "right" },
];

function TreeRow({ node }: { node: TreeNode }) {
  return (
    <li className={`flex h-5 items-center ${node.level ? "pl-[29px]" : "pl-[9px]"} ${node.muted ? "text-[#c3c3c3]" : ""}`}>
      <span className="flex w-[15px] shrink-0">
        {node.arrow && (
          <button aria-label={`Toggle ${node.label}`}>
            <svg viewBox="0 0 8 8" className="h-[9px] w-[9px] fill-[#858585]">
              <path d={node.arrow === "right" ? "M.5 0v8L8 4z" : "M0 .5h8L4 8z"} />
            </svg>
          </button>
        )}
      </span>
      <Icon name={node.icon} />
      <span className="ml-[3px] whitespace-nowrap">{node.label}</span>
    </li>
  );
}

function ModelTree() {
  return (
    <aside className="flex w-[350px] shrink-0 flex-col pt-3 pb-3 pl-1">
      <div className="relative z-10 -mb-px flex items-end">
        <button aria-label="Model Tree tab" className="flex h-[31px] w-[30px] items-center justify-center border border-b-0 border-[#c3c5c8] bg-[#fbfbfb]">
          <Icon name="treeTab" className="h-5 w-5" />
        </button>
        <button aria-label="Folder Browser" className="flex h-[30px] w-[30px] items-center justify-center border-y border-[#c3c5c8] bg-[#eeeff0]">
          <Icon name="folders" className="h-[18px] w-[18px]" />
        </button>
        <button aria-label="Favorites" className="flex h-[30px] w-[30px] items-center justify-center border border-[#c3c5c8] bg-[#eeeff0]">
          <Icon name="favorites" className="h-4 w-4" />
        </button>
      </div>
      <div className="flex flex-1 flex-col border border-r-3 border-b-2 border-[#c3c5c8]">
        <div className="flex h-[30px] items-center border-b border-[#c3c5c8] pl-5 text-[13px] font-bold text-[#4a4a4a]">
          <h2>Model Tree</h2>
          <button aria-label="Settings" className="ml-auto"><Icon name="tools" className="h-[19px] w-[19px]" /></button>
          <button aria-label="Settings menu" className="ml-2"><Caret /></button>
          <button aria-label="Show" className="ml-2"><Icon name="list" className="h-[19px] w-[19px]" /></button>
          <button aria-label="Show menu" className="mr-1 ml-2"><Caret /></button>
        </div>
        <div className="flex flex-1">
          <ul className="flex-1 pt-0.5 text-[15px] text-[#505050]">
            {tree.map((node) => (
              <TreeRow key={node.label} node={node} />
            ))}
          </ul>
          <div className="mr-px flex w-[18px] flex-col border-x border-[#c3c5c8] bg-[#f0f1f3]">
            <button aria-label="Scroll up" className="flex h-[17px] items-center justify-center border-b border-[#c3c5c8]">
              <Caret className="rotate-180 fill-[#444]" />
            </button>
            <div className="flex flex-1 flex-col">
              <div className="basis-[29%]" />
              <div className="flex flex-1 flex-col items-center justify-center gap-0.5 border-y border-[#c3c5c8] bg-linear-to-r from-[#fdfdfd] to-[#e6e7e9]">
                <span className="h-px w-1.5 bg-[#aaa]" />
                <span className="h-px w-1.5 bg-[#aaa]" />
                <span className="h-px w-1.5 bg-[#aaa]" />
                <span className="h-px w-1.5 bg-[#aaa]" />
              </div>
            </div>
            <button aria-label="Scroll down" className="flex h-[17px] items-center justify-center">
              <Caret />
            </button>
          </div>
        </div>
      </div>
    </aside>
  );
}

const viewTools: { icon: IconName; label: string; menu?: boolean; on?: boolean }[] = [
  { icon: "refit", label: "Refit" },
  { icon: "zoomIn", label: "Zoom In" },
  { icon: "zoomOut", label: "Zoom Out" },
  { icon: "repaint", label: "Repaint" },
  { icon: "shading", label: "Display Style", menu: true },
  { icon: "namedViews", label: "Saved Orientations", menu: true },
  { icon: "viewManager", label: "View Manager" },
  { icon: "datums", label: "Datum Display", menu: true },
  { icon: "annotations", label: "Annotation Display", on: true },
  { icon: "spin", label: "Spin Center", on: true },
  { icon: "display", label: "Simulation Display" },
];

function ViewToolbar() {
  return (
    <div className="flex h-7 border border-[#c9cbce] bg-[#eeeff0] px-1">
      {viewTools.map((tool) => (
        <button
          key={tool.label}
          aria-label={tool.label}
          className={`relative flex items-center justify-center border-l border-[#d3d5d8] last:w-7 last:border-r ${
            tool.menu || tool.on ? "w-7" : "w-[27px]"
          } ${tool.on ? "bg-[#e1e2e4] shadow-[inset_0_0_0_1px_#a9abad]" : "bg-[#fcfcfc]"}`}
        >
          <Icon name={tool.icon} />
          {tool.menu && (
            <svg viewBox="0 0 4 4" className="absolute right-px bottom-[3px] h-1 w-1">
              <path d="M4 0v4H0z" fill="#555" />
            </svg>
          )}
        </button>
      ))}
    </div>
  );
}

// small repeatable noise so the load arrows look scattered
const noise = (n: number) => {
  const v = Math.sin(n * 127.1) * 43758.5453;
  return v - Math.floor(v);
};

const range = (n: number) => Array.from({ length: n }, (_, i) => i);

// one bundle of load arrows, drawn for the upper lug and turned for the lower one
function LoadArrows() {
  return (
    <g stroke="#9a2fd0" fill="#9a2fd0">
      {range(19).map((i) => (
        <path key={i} d={`M580 ${152 + i * 7}H${680 + noise(i) * 50}`} strokeWidth="2" />
      ))}
      {range(15).map((i) => (
        <path
          key={i}
          d={`M${612 + noise(i + 3) * 50} ${150 + i * 9}L760 ${143 + i * 10}v10z`}
          strokeWidth="1"
        />
      ))}
      <path d="M700 148 770 130 840 150 965 205 900 345 860 340 740 290 690 275z" strokeWidth="2" />
      {/* loose ends along the upper edge */}
      {range(9).map((i) => (
        <path
          key={i}
          d={`M${765 - i * 4} ${126 + i * 4}l${50 + noise(i) * 20} ${-4 + i}l${90 + noise(i + 9) * 60} ${40 + i * 3}`}
          strokeWidth="2"
          fill="none"
        />
      ))}
      {/* arrow heads */}
      {range(14).map((i) => {
        const x = 1006 - i * 6;
        const y = 213 + i * 12;
        return <path key={i} d={`M${x} ${y}l-70 -16l-8 22z`} strokeWidth="1" />;
      })}
      {range(9).map((i) => (
        <path key={i} d={`M${716 + i * 16} ${294 + i * 6}l30 11`} strokeWidth="3" strokeDasharray="9 4" />
      ))}
      {/* gaps between the shafts */}
      {range(60).map((i) => {
        const t = noise(i + 20);
        const x = 790 + t * 110;
        const y = 175 + t * 40 + noise(i + 90) * 110;
        return <path key={i} d={`M${x} ${y}l6 -3`} stroke="#5a3a78" strokeWidth="2" />;
      })}
    </g>
  );
}

function Model() {
  return (
    <svg viewBox="14 17 1200 1200" className="h-[400px] w-[400px] shrink-0" role="img" aria-label="Ring model">
      <defs>
        <radialGradient id="ring" gradientUnits="userSpaceOnUse" cx="617" cy="615" r="541">
          <stop offset=".68" stopColor="#858e97" />
          <stop offset=".89" stopColor="#868f98" />
          <stop offset=".94" stopColor="#99a2aa" />
          <stop offset=".98" stopColor="#7b838b" />
          <stop offset="1" stopColor="#555c63" />
        </radialGradient>
        <radialGradient id="rim" gradientUnits="userSpaceOnUse" cx="588" cy="605" r="572">
          <stop offset=".9" stopColor="#2a2f34" stopOpacity="0" />
          <stop offset=".95" stopColor="#2a2f34" stopOpacity=".45" />
          <stop offset="1" stopColor="#15181b" stopOpacity=".95" />
        </radialGradient>
        <linearGradient id="lugTop" x1="0" x2="1">
          <stop offset="0" stopColor="#5f676e" />
          <stop offset=".15" stopColor="#7d868e" />
          <stop offset=".35" stopColor="#8b949c" />
          <stop offset=".5" stopColor="#737b83" />
          <stop offset="1" stopColor="#6b737b" />
        </linearGradient>
        <linearGradient id="lugBottom" x1="0" x2="1">
          <stop offset="0" stopColor="#6b737b" />
          <stop offset=".55" stopColor="#6e767e" />
          <stop offset=".75" stopColor="#868f97" />
          <stop offset=".92" stopColor="#737b83" />
          <stop offset="1" stopColor="#4d545a" />
        </linearGradient>
        <filter id="soft" x="-30%" y="-30%" width="160%" height="160%">
          <feGaussianBlur stdDeviation="12" />
        </filter>
        <clipPath id="disc">
          <circle cx="617" cy="615" r="541" />
        </clipPath>
      </defs>

      {/* constraint symbols */}
      <g fill="#0a0a7a">
        <path d="M478 42h26v14l-7 8v16l12 4-20 8-42 12V84l18 3 20-5V64l-7-8z" />
        <path d="M752 1120h22v12l4 18h-28l4-18z" />
      </g>

      {/* ring body */}
      <circle cx="617" cy="615" r="541" fill="url(#ring)" />
      <g clipPath="url(#disc)">
        <path d="M560 60 860 60 1020 220 980 340 900 330 760 160z" fill="#646c73" filter="url(#soft)" />
        <path d="M320 180 210 270 230 330 320 290z" fill="#7a828a" filter="url(#soft)" />
        <path d="M420 290 325 270 275 360 250 410 320 380z" fill="#1b1e21" opacity=".85" filter="url(#soft)" />
        <path d="M960 330 1030 370 1010 410 950 395z" fill="#98a1a9" filter="url(#soft)" />
        <path d="M220 850 330 860 470 970 300 960z" fill="#666e75" filter="url(#soft)" />
        <path d="M1000 810 900 830 810 920 920 950z" fill="#9aa3ab" filter="url(#soft)" />
        <path d="M1060 840 1000 830 910 960 950 1040 1080 900z" fill="#555c63" filter="url(#soft)" />
        <circle cx="617" cy="615" r="541" fill="url(#rim)" />
        <path d="M300 1060 610 1120 900 1080 860 1170 380 1170z" fill="#474d53" />
      </g>
      <circle cx="604" cy="615" r="373" fill="#fbfbfb" />
      <path d="M400 303A373 373 0 0 0 440 950" fill="none" stroke="#24282c" strokeWidth="5" />
      <path d="M262 770A373 373 0 0 0 440 950" fill="none" stroke="#454c53" strokeWidth="9" />

      {/* upper lug */}
      <path d="M392 146C470 110 540 97 610 97 700 97 790 120 850 160L760 300H420z" fill="#7d868e" />
      <path d="M400 146C450 132 520 136 590 136v8z" fill="#4a5157" />
      <path d="M315 152 330 147 560 137 770 134 800 300 700 298 585 320 440 303 335 302 315 290z" fill="url(#lugTop)" />
      <path d="M420 303C460 278 520 268 560 275L680 285 720 296 585 320z" fill="#7c858d" />
      <path d="M420 302C450 285 490 272 540 270 500 285 480 292 450 304z" fill="#4d545a" />
      <path d="M398 304 585 318 722 294" fill="none" stroke="#17191c" strokeWidth="6" />

      {/* lower lug */}
      <path d="M430 955 612 926 800 940 872 964 610 972 430 985z" fill="#697179" />
      <path d="M425 978 610 966 855 964 862 985 862 1112 850 1120 700 1133 440 1136z" fill="url(#lugBottom)" />
      <path d="M612 968H790C740 975 720 1003 680 1005 650 1005 630 995 612 1000z" fill="#626a71" />
      <path d="M680 1004C730 1000 740 975 790 968L740 972 700 990z" fill="#98a0a8" />

      <LoadArrows />
      <g transform="rotate(180 588.500 633)">
        <LoadArrows />
      </g>

      {/* selected surface edges */}
      <g fill="none" stroke="#48dcee" strokeWidth="4">
        <path d="M568 146 580 132 748 134 755 288 585 290 578 140zM568 146 748 136M568 146 572 262 670 268 690 286" />
        <path d="M424 980 608 968 608 1128 430 1134zM424 980 478 984 492 1000 600 1018 604 1130" />
      </g>

      {/* material tag */}
      <g fill="none" stroke="#f7931e" strokeWidth="5">
        <path d="M713 434v16c0 14 12 20 28 20M742 470c0-16 10-27 24-27h58v52h-58c-14 0-24-10-24-25z" />
        <circle cx="770" cy="470" r="6" />
      </g>

      {/* reference point */}
      <path d="M536 617h72" stroke="#54e4f4" strokeWidth="4" />
      <path d="M609 617 613 688" stroke="#e8404a" strokeWidth="4" />
      <circle cx="536" cy="617" r="6" fill="#54e4f4" />
      <circle cx="613" cy="688" r="7" fill="#e8404a" />
      <circle cx="609" cy="617" r="8" fill="#2ce62c" />
      <path d="m577 622 26 26M603 622l-26 26" stroke="#3fb065" strokeWidth="3" />
      <text x="622" y="648" fontSize="44" fill="#55b878" fontFamily="Liberation Sans, Arial, sans-serif">TO_SELECT</text>
    </svg>
  );
}

function Select({ label, options, className = "" }: { label: string; options: string[]; className?: string }) {
  return (
    <div className={`relative ${className}`}>
      <select
        aria-label={label}
        className="block h-[23px] w-full appearance-none border border-[#bfc1c4] bg-linear-to-b from-[#fcfcfc] to-[#eeeff0] pr-5 pl-[5px] outline-none"
      >
        {options.map((o) => (
          <option key={o}>{o}</option>
        ))}
      </select>
      <span className="pointer-events-none absolute inset-y-0 right-0 flex w-[15px] items-center justify-center border border-[#bfc1c4]">
        <Caret />
      </span>
    </div>
  );
}

function Radio({ name, label, checked, onSelect }: { name: string; label: string; checked: boolean; onSelect: () => void }) {
  return (
    <label className="flex items-center gap-1.5">
      <input
        type="radio"
        name={name}
        checked={checked}
        onChange={onSelect}
        className="h-[13px] w-[13px] appearance-none rounded-full border border-[#9a9c9f] bg-white checked:bg-[radial-gradient(circle,#2b2b2b_0,#2b2b2b_3px,#fff_4px)]"
      />
      {label}
    </label>
  );
}

function Fieldset({ title, className = "", children }: { title: string; className?: string; children: ReactNode }) {
  return (
    <fieldset className={`min-w-0 border border-[#c6c8cb] px-[7px] ${className}`}>
      <legend className="ml-1.5 px-1 text-xs font-bold text-[#444]">{title}</legend>
      {children}
    </fieldset>
  );
}

const pushButton =
  "h-6 rounded-xs border border-[#c0c2c5] bg-linear-to-b from-[#fcfcfc] to-[#e9eaec] font-bold disabled:border-[#d3d5d7] disabled:bg-none disabled:text-[#a9a9a9]";

function VectorFields({ title, values, unit, className = "" }: { title: string; values: string[]; unit: string[]; className?: string }) {
  return (
    <Fieldset title={title} className={`pb-[7px] ${className}`}>
      <Select label={`${title} type`} options={["Components", "Dir Vector & Mag"]} className="mt-0.5" />
      <div className="mt-1 mb-0.5 flex flex-col gap-0.5">
        {["X", "Y", "Z"].map((axis, i) => (
          <label key={axis} className="flex items-center">
            <span className="w-[43px] shrink-0">{axis}</span>
            <input defaultValue={values[i]} className="h-6 w-full min-w-0 border border-[#b5b7ba] bg-white px-[3px] outline-none" />
          </label>
        ))}
      </div>
      <Select label={`${title} units`} options={unit} />
    </Fieldset>
  );
}

function LoadDialog() {
  const [refType, setRefType] = useState("Intent");
  const [csys, setCsys] = useState("World");

  return (
    <div
      role="dialog"
      aria-label="Force/Moment Load"
      className="absolute top-[162px] right-[17px] z-20 w-[389px] border-3 border-[#c5c8cb] bg-[#eeeff0] text-[13px] text-[#4a4a4a]"
    >
      <div className="flex h-6 items-center border-b border-[#d0d2d5] bg-linear-to-b from-[#fcfcfc] to-[#f0f1f2] px-1">
        <h2 className="flex-1 text-center font-bold text-[#bcbcbc]">Force/Moment Load</h2>
        <button aria-label="Close dialog" className="w-4">
          <svg viewBox="0 0 8 8" className="mx-auto h-2 w-2">
            <path d="m1 1 6 6M7 1 1 7" stroke="#b5b5b5" strokeWidth="2.200" />
          </svg>
        </button>
      </div>

      <div className="px-[5px] pb-1">
        <Fieldset title="Name" className="pb-2">
          <div className="mt-0.5 flex items-start gap-1">
            <input aria-label="Name" defaultValue="Load1" className="h-[23px] min-w-0 flex-1 border border-[#b5b7ba] bg-white px-[3px] outline-none" />
            <button aria-label="Color" className="flex h-5 w-8 items-center justify-center rounded-xs border border-[#c0c2c5] bg-linear-to-b from-[#fcfcfc] to-[#e9eaec]">
              <Icon name="flip" className="h-[14px] w-[14px]" />
            </button>
          </div>
        </Fieldset>

        <Fieldset title="Member of Set" className="pb-2">
          <div className="mt-0.5 flex gap-0.5">
            <Select label="Member of Set" options={["LoadSet1"]} className="flex-1" />
            <button className={`w-[60px] ${pushButton}`}>New...</button>
          </div>
        </Fieldset>

        <Fieldset title="References" className="pb-[7px]">
          <Select label="References" options={["Surfaces", "Edges/Curves", "Points"]} className="mt-0.5" />
          <div className="flex h-[23px] items-center gap-2">
            <span className="-mr-0.5">Surfaces :</span>
            {["Individual", "Boundary", "Intent"].map((o) => (
              <Radio key={o} name="surfaces" label={o} checked={refType === o} onSelect={() => setRefType(o)} />
            ))}
          </div>
          <ul className="h-[76px] border border-[#b5b7ba] bg-[#f8f6fd] px-4 py-px leading-[18px]">
            <li>Intent Surface "Extrude 13"</li>
            <li>Intent Surface "Extrude 12"</li>
          </ul>
          <button disabled className={`mt-0.5 block w-28 ${pushButton}`}>Surface Sets...</button>
        </Fieldset>

        <Fieldset title="Properties" className="pb-[7px]">
          <div className="flex h-[22px] items-center gap-1">
            <span className="mr-0.5">Coordinate System:</span>
            {["World", "Selected"].map((o) => (
              <Radio key={o} name="csys" label={o} checked={csys === o} onSelect={() => setCsys(o)} />
            ))}
          </div>
          <div className="flex items-center gap-[7px]">
            <div className="flex h-[22px] flex-1 items-center gap-1 border border-[#c6c8cb] bg-[#f8f6fd] pl-1 text-[#a5a5a5]">
              <Icon name="wcs" />
              WCS
            </div>
            <button disabled className={`w-[102px] ${pushButton}`}>Advanced &lt;&lt;</button>
          </div>
          <p className="leading-[19px]">Distribution</p>
          <Select label="Distribution" options={["Total Load at Point", "Total Load", "Force Per Unit Area"]} />
          <input
            aria-label="Point"
            readOnly
            value={'Point "TO_SELECT"'}
            className="mt-0.5 block h-[22px] w-full border border-[#b0b2b5] bg-[#eee8f8] px-4 text-[#333] outline-none"
          />
        </Fieldset>

        <div className="flex">
          <VectorFields title="Force" values={["0", "0", "0"]} unit={["mm kg / sec^2", "N"]} className="flex-1" />
          <VectorFields title="Moment" values={["0", "-300", "0"]} unit={["m N", "mm N"]} className="-ml-px flex-1" />
        </div>

        <div className="mt-1 flex justify-end gap-1">
          <button className="h-6 w-[72px] rounded-xs border border-[#8ec5e6] bg-linear-to-b from-[#b5e1fa] to-[#7fcaf5] font-bold">OK</button>
          <button className={`w-[72px] ${pushButton}`}>Preview</button>
          <button className={`w-[72px] ${pushButton}`}>Cancel</button>
        </div>
      </div>
    </div>
  );
}

function StatusBar() {
  return (
    <footer className="flex h-[31px] items-center border-t-2 border-[#999b9d] bg-[#eeeff0] text-[13px] text-[#505050]">
      <button aria-label="Navigator" className="ml-1.5 flex h-[22px] w-[22px] items-center justify-center border border-[#b5b7ba] bg-[#dfe1e4]">
        <Icon name="treeTabBlue" />
      </button>
      <button aria-label="Browser" className="ml-1 flex h-[22px] w-[22px] items-center justify-center border border-[#d0d2d5] bg-[#f6f7f8]">
        <Icon name="globe" className="h-[18px] w-[18px]" />
      </button>
      <span className="ml-2 h-6 w-px bg-[#d0d2d5]" />
      <div className="ml-auto flex items-center pr-[17px]">
        <span className="h-6 w-px bg-[#d0d2d5]" />
        <span className="ml-9 h-6 w-px bg-[#d0d2d5]" />
        <span className="ml-1 h-2.5 w-2.5 rounded-full bg-[#c3c3c3]" />
        <span className="ml-0.5 h-1.5 w-1.5 rounded-full bg-[#dcdcdc]" />
        <span className="ml-0.5 h-1.5 w-1.5 rounded-full bg-[#dcdcdc]" />
        <span className="ml-0.5 h-6 w-px bg-[#d0d2d5]" />
        <button aria-label="Find" className="ml-1 flex h-6 w-10 items-center justify-center rounded-xs border border-[#c0c2c5] bg-linear-to-b from-[#fcfcfc] to-[#e9eaec]">
          <Icon name="binoculars" />
        </button>
        <span className="ml-0.5 h-6 w-px bg-[#d0d2d5]" />
        <span className="ml-1 w-[93px]">1 selected</span>
        <Select label="Selection filter" options={["All", "Features", "Geometry"]} className="w-[178px]" />
      </div>
    </footer>
  );
}

export default function App() {
  return (
    <div className="relative flex min-h-screen flex-col bg-[#fbfbfb] font-['Liberation_Sans',Arial,sans-serif]">
      <TitleBar />
      <TabRow />
      <Ribbon />
      <main className="flex flex-1">
        <ModelTree />
        <div className="relative flex flex-1 items-center justify-center">
          <div className="absolute inset-x-0 top-[7px] flex justify-center">
            <ViewToolbar />
          </div>
          <Model />
          <p className="absolute bottom-12 left-[11px] text-[13px] text-[#6a6a6a]">
            Structure : 3D : Native Mode : Default Bonded Interface
          </p>
        </div>
      </main>
      <StatusBar />
      {/* top edge of the desktop task bar */}
      <div className="flex h-[5px] border-t-2 border-[#1d2a3c] bg-[#2b4468]">
        <span className="ml-[72px] w-[66px] bg-linear-to-r from-[#d5d8dc] to-[#6f7a88]" />
        <span className="ml-[214px] w-[65px] bg-linear-to-r from-[#d5d8dc] to-[#6f7a88]" />
        <span className="ml-[5px] w-[65px] bg-linear-to-r from-[#d5d8dc] to-[#6f7a88]" />
      </div>
      <LoadDialog />
    </div>
  );
}
